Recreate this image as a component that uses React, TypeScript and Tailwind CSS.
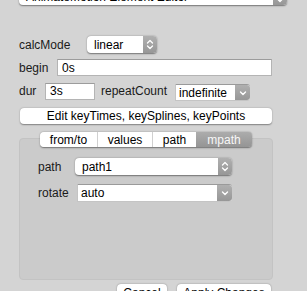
import React from "react";

const Stepper = ({ h = "h-full" }: { h?: string }) => (
  <div className={`w-[14px] ${h} rounded-r-[4px] bg-gradient-to-b from-[#b0b0b0] to-[#979797] flex items-center justify-center`}>
    <svg width="8" height="11" viewBox="0 0 8 11" fill="none">
      <path d="M1.5 4 L4 1.5 L6.5 4" stroke="white" strokeWidth="1.3" strokeLinecap="round" strokeLinejoin="round" />
      <path d="M1.5 7 L4 9.5 L6.5 7" stroke="white" strokeWidth="1.3" strokeLinecap="round" strokeLinejoin="round" />
    </svg>
  </div>
);

const Chevron = () => (
  <div className="w-[15px] h-full rounded-r-[3px] bg-gradient-to-b from-[#b0b0b0] to-[#979797] flex items-center justify-center">
    <svg width="8" height="6" viewBox="0 0 8 6" fill="none">
      <path d="M1.5 2 L4 4.5 L6.5 2" stroke="white" strokeWidth="1.4" strokeLinecap="round" strokeLinejoin="round" />
    </svg>
  </div>
);

const PopUp = ({ text, className }: { text: string; className: string }) => (
  <div className={`flex items-stretch bg-white rounded-[4px] shadow-[0_0.5px_1.5px_rgba(0,0,0,0.45)] ${className}`}>
    <div className="flex-1 flex items-center pl-[7px] text-black truncate">{text}</div>
    <Stepper />
  </div>
);

const Combo = ({ text, className }: { text: string; className: string }) => (
  <div className={`flex items-stretch bg-white border-t border-t-[#9a9a9a] border-l border-l-[#c4c4c4] border-b border-b-[#c4c4c4] rounded-r-[3px] ${className}`}>
    <div className="flex-1 flex items-center pl-[3px] text-black">{text}</div>
    <Chevron />
  </div>
);

const Field = ({ text, className }: { text: string; className: string }) => (
  <div className={`flex items-center bg-white border border-[#b4b4b4] border-t-[#9c9c9c] pl-[4px] text-black ${className}`}>{text}</div>
);

export default function App() {
  return (
    <div
      className="w-[307px] h-[291px] bg-[#d4d4d4] overflow-hidden text-[12px] text-[#1a1a1a]"
      style={{ fontFamily: '"Liberation Sans", Arial, sans-serif' }}
    >
      <div className="ml-[19px] mt-[-11px] w-[268px] h-[16px]">
        <PopUp text="AnimateMotion Element Editor" className="h-[16px]" />
      </div>

      <div className="pl-[19px] pr-[35px] mt-[31px] flex flex-col">
        <div className="flex items-center h-[17px]">
          <div className="w-[68px]">calcMode</div>
          <PopUp text="linear" className="w-[70px] h-[17px]" />
        </div>

        <div className="flex items-center h-[17px] mt-[6px]">
          <div className="w-[38px]">begin</div>
          <Field text="0s" className="flex-1 h-[17px]" />
        </div>

        <div className="flex items-center h-[18px] mt-[6px]">
          <div className="w-[26px]">dur</div>
          <Field text="3s" className="w-[50px] h-[17px]" />
          <div className="ml-[6px] w-[74px]">repeatCount</div>
          <Combo text="indefinite" className="w-[75px] h-[17px] mt-[3px]" />
        </div>

        <div className="mt-[8px] ml-[1px] h-[16px] bg-white rounded-[4px] shadow-[0_0.5px_1.5px_rgba(0,0,0,0.4)] flex items-center justify-center text-black">
          Edit keyTimes, keySplines, keyPoints
        </div>

        <div className="mt-[8px] flex flex-col">
          <div className="relative z-10 flex justify-center h-[15px] ml-[1px]">
            <div className="flex h-[15px] rounded-[4px] shadow-[0_0.5px_1.5px_rgba(0,0,0,0.45)] overflow-hidden text-black">
              <div className="w-[58px] bg-white flex items-center justify-center border-r border-[#d0d0d0]">from/to</div>
              <div className="w-[55px] bg-white flex items-center justify-center border-r border-[#d0d0d0]">values</div>
              <div className="w-[43px] bg-white flex items-center justify-center">path</div>
              <div className="w-[56px] bg-gradient-to-b from-[#acacac] to-[#959595] text-[#f7f7f7] flex items-center justify-center">mpath</div>
            </div>
          </div>
          <div className="mt-[-9px] h-[142px] mr-[-1px] bg-[#cbcbcb] rounded-[4px] border border-[#c3c3c3] pt-[19px] pl-[18px] flex flex-col">
            <div className="flex items-center h-[17px]">
              <div className="w-[37px]">path</div>
              <PopUp text="path1" className="w-[157px] h-[17px]" />
            </div>
            <div className="flex items-center h-[18px] mt-[9px]">
              <div className="w-[39px]">rotate</div>
              <Combo text="auto" className="w-[155px] h-[18px]" />
            </div>
          </div>
        </div>

        <div className="mt-[4px] flex justify-end gap-[10px] pr-[1px]">
          <div className="w-[50px] h-[18px] bg-white rounded-[4px] shadow-[0_0.5px_1.5px_rgba(0,0,0,0.45)] flex items-center justify-center text-black">Cancel</div>
          <div className="w-[94px] h-[18px] bg-white rounded-[4px] shadow-[0_0.5px_1.5px_rgba(0,0,0,0.45)] flex items-center justify-center text-black">Apply Changes</div>
        </div>
      </div>
    </div>
  );
}
